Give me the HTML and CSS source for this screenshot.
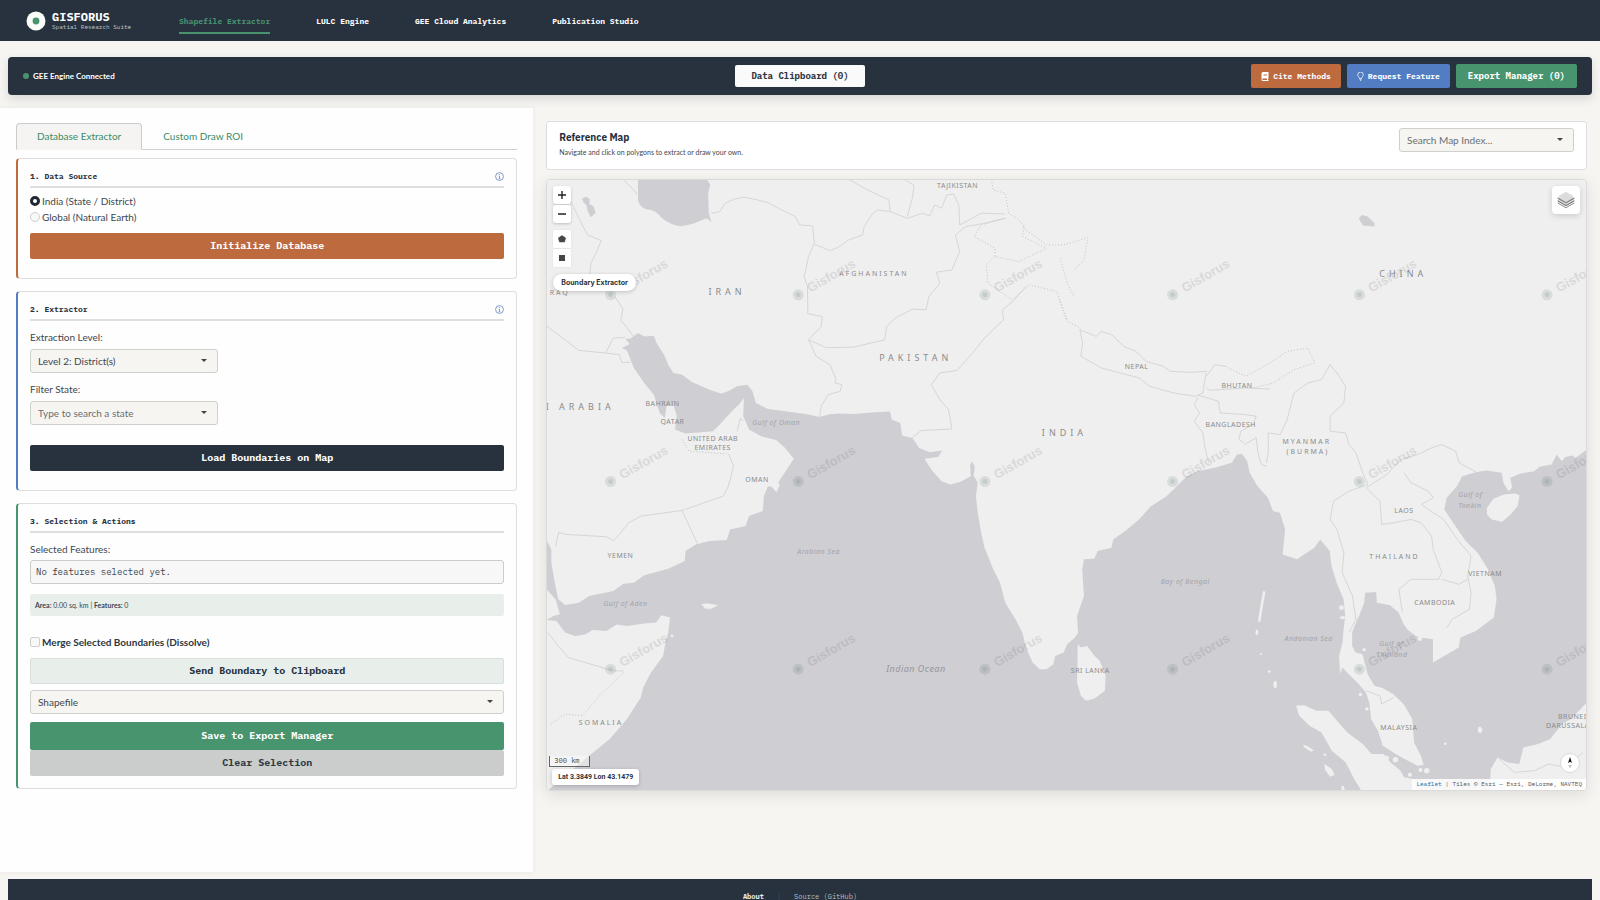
FILE: index.html
```html
<!DOCTYPE html>
<html lang="en">
<head>
<meta charset="utf-8">
<meta name="viewport" content="width=device-width, initial-scale=1">
<title>Gisforus – Spatial Research Suite</title>
<link rel="stylesheet" href="styles.css">
</head>
<body>
<header class="topbar">
  <a class="brand" href="#">
    <svg class="brand-mark" viewBox="0 0 20 20" aria-hidden="true"><circle cx="10" cy="10" r="9.5" fill="#fbfbf9"/><circle cx="10" cy="10" r="3.4" fill="#47946f"/></svg>
    <span class="brand-text"><span class="brand-name">GISFORUS</span><span class="brand-sub">Spatial Research Suite</span></span>
  </a>
  <nav class="nav">
    <a class="nav-link active" href="#">Shapefile Extractor</a>
    <a class="nav-link" href="#">LULC Engine</a>
    <a class="nav-link" href="#">GEE Cloud Analytics</a>
    <a class="nav-link" href="#">Publication Studio</a>
  </nav>
</header>

<section class="statusbar">
  <div class="status"><span class="dot"></span>GEE Engine Connected</div>
  <button class="bar-btn clip" type="button">Data Clipboard (0)</button>
  <div class="bar-actions">
    <button class="bar-btn small rust" type="button"><svg class="bi" width="8" height="9" viewBox="0 0 16 18" aria-hidden="true"><path fill="#fff" fill-rule="evenodd" d="M4 0h11v13l-1 1v2h1v2H4a3 3 0 0 1-3-3V3a3 3 0 0 1 3-3zm1 4v1h7V4zm0 3v1h7V7zM4 13a1.5 1.5 0 0 0 0 3h8v-3z"/></svg>Cite Methods</button>
    <button class="bar-btn small blue" type="button"><svg class="bi" width="7" height="9" viewBox="0 0 14 18" aria-hidden="true"><path fill="none" stroke="#fff" stroke-width="1.5" d="M5 13c0-3-3.500-4-3.500-7.500a5.500 5.500 0 0 1 11 0C12.500 9 9 10 9 13zM5 15.500h4M6 17.300h2"/></svg>Request Feature</button>
    <button class="bar-btn green" type="button">Export Manager (0)</button>
  </div>
</section>

<main class="workspace">
  <aside class="panel">
    <div class="tabs" role="tablist">
      <button class="tab active" type="button" role="tab">Database Extractor</button>
      <button class="tab" type="button" role="tab">Custom Draw ROI</button>
    </div>

    <section class="card card-rust">
      <h2 class="card-title">1. Data Source<svg class="info" viewBox="0 0 16 16" aria-hidden="true"><circle cx="8" cy="8" r="7"/><path d="M8 7v5M6.500 7.200H8M6.500 12h3M8 3.500v1.500"/></svg></h2>
      <label class="choice"><input type="radio" name="src" checked>India (State / District)</label>
      <label class="choice"><input type="radio" name="src">Global (Natural Earth)</label>
      <button class="btn rust first" type="button">Initialize Database</button>
    </section>

    <section class="card card-blue">
      <h2 class="card-title">2. Extractor<svg class="info" viewBox="0 0 16 16" aria-hidden="true"><circle cx="8" cy="8" r="7"/><path d="M8 7v5M6.500 7.200H8M6.500 12h3M8 3.500v1.500"/></svg></h2>
      <label class="label" for="level">Extraction Level:</label>
      <div class="select narrow"><select id="level"><option>Level 2: District(s)</option></select></div>
      <label class="label" for="state">Filter State:</label>
      <div class="select narrow hint"><select id="state"><option>Type to search a state</option></select></div>
      <button class="btn navy load" type="button">Load Boundaries on Map</button>
    </section>

    <section class="card card-green">
      <h2 class="card-title">3. Selection &amp; Actions</h2>
      <div class="label">Selected Features:</div>
      <output class="selected">No features selected yet.</output>
      <div class="stats"><b>Area:</b> 0.00 sq. km | <b>Features:</b> 0</div>
      <label class="choice merge"><input type="checkbox">Merge Selected Boundaries (Dissolve)</label>
      <button class="btn pale" type="button">Send Boundary to Clipboard</button>
      <div class="select format"><select aria-label="Format"><option>Shapefile</option></select></div>
      <button class="btn green save" type="button">Save to Export Manager</button>
      <button class="btn grey" type="button">Clear Selection</button>
    </section>
  </aside>

  <section class="stage">
    <div class="map-head">
      <div>
        <h1 class="map-title">Reference Map</h1>
        <p class="map-sub">Navigate and click on polygons to extract or draw your own.</p>
      </div>
      <div class="select search hint"><select aria-label="Search map"><option>Search Map Index...</option></select></div>
    </div>

    <div class="map">
      <svg class="map-art" viewBox="546 180 1041 611" preserveAspectRatio="xMidYMid slice" aria-label="Map of South Asia">
        <defs>
          <g id="wm"><circle r="5.500" fill="#4d6d62" opacity=".14"/><circle r="2.500" fill="#4d6d62" opacity=".14"/><text class="wm" x="12" y="-2" transform="rotate(-30 12 -2)">Gisforus</text></g>
        </defs>
        <rect x="546" y="180" width="1041" height="611" fill="#efefef"/>
        <g transform="translate(530 110) scale(.3444 .33333)">
          <path class="sea" d="M275 688L290 686 312 670 330 680 358 678 366 700 388 735 400 765 415 790 440 795 470 818 520 840 555 852 580 842 600 830 630 825 645 845 655 880 690 898 740 905 800 913 840 922 870 914 900 912 940 913 1000 908 1045 906 1050 930 1075 940 1080 978 1110 985 1130 1015 1160 1028 1197 1023 1185 1042 1145 1048 1165 1080 1195 1115 1220 1125 1250 1117 1280 1100 1278 1065 1284 1056 1292 1072 1288 1098 1300 1120 1295 1160 1300 1210 1310 1270 1320 1315 1345 1380 1365 1420 1380 1480 1410 1530 1430 1570 1440 1615 1460 1660 1480 1680 1500 1680 1520 1665 1525 1640 1550 1630 1560 1605 1580 1588 1592 1572 1589 1520 1609 1460 1604 1380 1609 1350 1639 1348 1649 1325 1689 1315 1694 1290 1729 1265 1769 1230 1804 1190 1849 1160 1884 1125 1909 1100 1939 1085 1989 1075 2039 1060 2054 1035 2069 1033 2084 1055 2091 1090 2114 1130 2144 1165 2159 1205 2179 1210 2194 1260 2187 1335 2229 1350 2249 1335 2279 1315 2296 1290 2324 1325 2329 1370 2344 1420 2364 1470 2369 1520 2364 1560 2361 1600 2351 1640 2354 1694 2361 1675 2379 1695 2409 1725 2429 1750 2439 1780 2444 1830 2464 1865 2478 1910 2524 1940 2579 1970 2597 1968 2589 1940 2569 1900 2564 1830 2539 1785 2509 1755 2479 1737 2454 1730 2434 1695 2419 1635 2399 1630 2389 1610 2389 1570 2404 1530 2409 1520 2424 1480 2427 1450 2459 1448 2461 1480 2499 1488 2524 1510 2539 1545 2549 1560 2574 1580 2589 1585 2624 1590 2624 1660 2649 1645 2699 1615 2704 1585 2749 1565 2801 1525 2809 1470 2804 1430 2784 1380 2754 1330 2719 1295 2689 1250 2657 1200 2664 1165 2694 1130 2709 1100 2749 1088 2779 1083 2824 1090 2829 1120 2844 1145 2854 1135 2849 1105 2879 1092 2919 1085 2934 1072 2969 1065 2984 1035 2999 1055 3009 1042 3029 1038 3039 1045 3072 1020 3072 2044 50 2044 100 2000 170 1940 230 1890 280 1830 320 1765 327 1735 350 1690 385 1640 392 1600 400 1570 405 1525 380 1518 365 1540 330 1543 280 1550 250 1546 220 1565 180 1562 160 1575 130 1581 100 1570 75 1535 46 1532 66 1520 85 1515 72 1470 46 1440 46 1292 60 1320 60 1360 70 1420 80 1470 100 1487 140 1480 170 1460 240 1445 270 1423 300 1420 330 1398 400 1378 448 1355 450 1325 480 1305 520 1295 570 1292 580 1260 625 1250 635 1220 675 1205 678 1160 690 1130 701 1132 715 1148 724 1128 720 1118 735 1095 765 1048 740 1015 715 992 670 980 635 960 618 920 620 865 605 885 590 900 545 950 530 965 450 972 420 960 425 920 415 885 395 890 390 925 375 910 358 855 330 820 300 775 280 722 265 715 288 703Z"/>
          <path class="sea" d="M312 207L312 270Q318 300 350 300Q368 305 382 325Q405 345 437 349Q470 345 488 335L512 325 525 336 518 310 516 250 522 225 512 207Z"/>
          <path class="sea" d="M150 265L162 260 172 268 170 282 182 288 189 308 175 322 166 305 162 286 152 275ZM2408 325L2418 315 2434 320 2454 339 2454 350 2438 348 2420 347Z"/>
          <path class="isle" d="M1591 1605L1600 1615 1618 1610 1640 1640 1655 1655 1672 1700 1670 1745 1640 1768 1615 1775 1600 1760 1589 1720ZM2781 1195L2800 1168 2830 1155 2865 1152 2876 1158 2870 1190 2850 1215 2825 1237 2795 1230 2781 1215ZM496 1485L512 1482 545 1488 525 1498 508 1498ZM2130 1445L2137 1447 2128 1500 2122 1538 2115 1536 2122 1490ZM2226 1790L2250 1788 2285 1805 2320 1805 2345 1835 2375 1870 2420 1905 2445 1935 2480 1935 2500 1960 2530 1985 2540 2005 2565 2010 2585 2044 2415 2044 2395 2010 2370 1960 2330 1925 2300 1870 2265 1850 2235 1820ZM2246 1906L2262 1912 2278 1925 2268 1927 2250 1915ZM2308 1965L2330 1980 2338 1998 2325 2003 2310 1982ZM2358 2030L2365 2032 2368 2044 2358 2044ZM2790 2044L2792 1980 2812 1945 2840 1960 2875 1965 2887 1915 2930 1905 2965 1890 3000 1845 3025 1830 3072 1780 3072 2044ZM2755 1855L2762 1852 2769 1862 2762 1873 2755 1868Z"/>
          <g fill="#efefef"><ellipse cx="2112" cy="1569" rx="4" ry="8"/><ellipse cx="2165" cy="1726" rx="5" ry="11"/><circle cx="2124" cy="1634" r="3"/><circle cx="2148" cy="1687" r="4"/><circle cx="2358" cy="1495" r="7"/><ellipse cx="2361" cy="1525" rx="8" ry="5"/><circle cx="2413" cy="1756" r="5"/><circle cx="2432" cy="1799" r="5"/><circle cx="2424" cy="1621" r="5"/><circle cx="2586" cy="1588" r="7"/><circle cx="2660" cy="1904" r="4"/><circle cx="2488" cy="1947" r="8"/><circle cx="2515" cy="1952" r="8"/><circle cx="2588" cy="1983" r="6"/><circle cx="2606" cy="1985" r="8"/><circle cx="2557" cy="1997" r="6"/><circle cx="2310" cy="1937" r="4"/><circle cx="3064" cy="1797" r="6"/><circle cx="411" cy="1580" r="4"/></g>
          <g class="border">
            <path d="M525 310L550 305 565 280 590 268 620 262 660 270 690 278 730 300 770 320 782 345 820 348 825 400 808 440 800 480 795 500 805 530 806 612 848 620 845 650 808 690 830 740 870 765 888 808 885 820 905 825 900 845 865 855 845 890 840 922"/>
            <path d="M808 690L860 714 940 712 1030 690 1035 650 1060 625 1110 598 1150 600 1158 560 1190 520 1180 487 1225 480 1248 425 1235 375 1265 350 1320 340 1380 325M825 403L870 422 895 412 925 390 965 375 970 350 995 310 1010 300 1045 305 1095 325 1140 310 1160 318 1175 285 1195 295 1210 255 1230 252 1245 285 1248 345 1310 310 1380 312"/>
            <path d="M925 208L980 240 1042 270 1045 303M1088 210L1115 225 1110 265 1095 320M272 212L300 240 310 255M115 270L140 325 165 375 205 392 190 430 175 460 172 492M245 560L268 598 262 632 278 650 300 682M46 648L140 722 218 730 240 685 275 683M218 730L258 735 265 758 290 758"/>
            <path d="M1110 985L1135 963 1225 958 1215 900 1190 870 1165 825 1190 790 1240 782 1285 730 1320 685 1345 660 1375 630 1372 600 1405 572 1440 530M575 1033L590 1070 575 1130 560 1160 440 1203 320 1220 285 1240 262 1270 240 1294 220 1282 100 1275 82 1268 72 1310M440 1203L485 1303M600 965L610 925 618 935"/>
            <path d="M1597 660L1645 680 1660 665 1690 675 1725 710 1760 725 1790 755 1840 770 1860 785 1925 788 1965 785 1955 850 1935 860 1870 850 1800 830 1770 805 1660 775 1600 740 1605 700ZM1965 800L1990 765 2020 770M1965 835L1975 842 2080 835 2150 838M1940 857L1970 865 2000 875 2005 910 2080 915 2110 920 2100 945 2065 965 2060 990 2075 1000M1940 865L1930 885 1945 910 1930 935 1955 970 1960 1010 1972 1060"/>
            <path d="M2180 975L2200 930 2210 890 2220 850 2260 820 2300 810 2325 765 2345 790 2370 830 2365 880 2325 920 2325 965 2370 970 2380 1005 2400 1030 2420 1090 2435 1125 2380 1145 2335 1175 2325 1230 2345 1260 2365 1330 2360 1390 2390 1460 2400 1530 2380 1570M2140 1060L2145 1030 2145 970 2180 975M2075 1005L2110 985 2115 1030 2125 1065 2140 1070"/>
            <path d="M2430 1135L2490 1095 2530 1050 2580 1035 2620 1015 2650 1005 2690 1025 2700 1060 2750 1088M2430 1135L2470 1175 2475 1245 2510 1240 2560 1230 2590 1240 2620 1280 2625 1320 2650 1390 2640 1410 2560 1410 2525 1440 2535 1510M2540 1090L2560 1120 2610 1145 2625 1165 2590 1185 2655 1230 2695 1290 2735 1340 2725 1400 2735 1450 2730 1500 2680 1530 2665 1555M2650 1410L2700 1425 2725 1410M2430 1745L2470 1760 2475 1785 2510 1765M2817 1950L2860 1990 2920 1985 2960 1965 3010 1975 3060 1930M50 1570L80 1610 110 1645 240 1685 270 1685"/>
            <path class="dots" d="M270 1690L200 1760 150 1820 100 1815 55 1848M440 990L460 1025 570 1033M1340 208L1345 240 1380 250 1390 310 1420 330 1440 360 1500 405 1550 405 1620 383 1610 450 1580 480M1380 325L1310 345 1290 380 1350 415 1350 440 1325 465 1330 520 1400 570 1450 525 1530 545 1560 630M1350 440L1420 455 1500 415 1430 380 1435 345M1540 445L1560 520 1580 560M1539 575L1560 635 1600 655M2020 770L2080 800 2150 760 2200 725 2260 715 2280 760 2220 780 2160 820 2100 835"/>
          </g>
        </g>
        <g class="place">
          <text x="937" y="188">TAJIKISTAN</text><text x="645" y="406">BAHRAIN</text><text x="660" y="424">QATAR</text><text x="687" y="441">UNITED ARAB</text><text x="694" y="450">EMIRATES</text><text x="745" y="483">OMAN</text><text x="607" y="559">YEMEN</text><text x="1125" y="369">NEPAL</text><text x="1222" y="388">BHUTAN</text><text x="1206" y="427">BANGLADESH</text><text x="1395" y="514">LAOS</text><text x="1469" y="577">VIETNAM</text><text x="1415" y="606">CAMBODIA</text><text x="1071" y="674">SRI LANKA</text><text x="1381" y="731">MALAYSIA</text><text x="1559" y="720">BRUNEI</text><text x="1547" y="729">DARUSSALAM</text>
        </g>
        <g class="place wide"><text x="839" y="276">AFGHANISTAN</text><text x="1283" y="444">MYANMAR</text><text x="1287" y="454">(BURMA)</text><text x="1370" y="560">THAILAND</text><text x="578" y="726">SOMALIA</text><text x="549" y="295">RAQ</text></g>
        <g class="place nation"><text x="708" y="295">IRAN</text><text x="879" y="361">PAKISTAN</text><text x="1042" y="436">INDIA</text><text x="1380" y="277">CHINA</text><text x="545" y="410">I ARABIA</text></g>
        <g class="water"><text x="752" y="425">Gulf of Oman</text><text x="797" y="555">Arabian Sea</text><text x="603" y="607">Gulf of Aden</text><text x="1161" y="585">Bay of Bengal</text><text x="1459" y="498">Gulf of</text><text x="1459" y="509">Tonkin</text><text x="1285" y="642">Andaman Sea</text><text x="1380" y="647">Gulf of</text><text x="1377" y="658">Thailand</text><text class="ocean" x="886" y="673">Indian Ocean</text></g>
        <use href="#wm" x="610" y="295"/><use href="#wm" x="798" y="295"/><use href="#wm" x="985" y="295"/><use href="#wm" x="1173" y="295"/><use href="#wm" x="1360" y="295"/><use href="#wm" x="1548" y="295"/>
        <use href="#wm" x="610" y="482"/><use href="#wm" x="798" y="482"/><use href="#wm" x="985" y="482"/><use href="#wm" x="1173" y="482"/><use href="#wm" x="1360" y="482"/><use href="#wm" x="1548" y="482"/>
        <use href="#wm" x="610" y="670"/><use href="#wm" x="798" y="670"/><use href="#wm" x="985" y="670"/><use href="#wm" x="1173" y="670"/><use href="#wm" x="1360" y="670"/><use href="#wm" x="1548" y="670"/>
      </svg>

      <div class="map-tools">
        <div class="zoom">
          <button type="button" aria-label="Zoom in"><svg width="10" height="10" viewBox="0 0 10 10"><path d="M5 1v8M1 5h8" stroke="#222" stroke-width="1.400"/></svg></button>
          <button type="button" aria-label="Zoom out"><svg width="10" height="10" viewBox="0 0 10 10"><path d="M1 5h8" stroke="#222" stroke-width="1.400"/></svg></button>
        </div>
        <div class="draw">
          <button type="button" aria-label="Draw polygon"><svg width="8" height="8" viewBox="0 0 8 8"><path d="M4 .5L7.700 3 6.500 7h-5L.3 3z" fill="#464646" stroke="#464646" stroke-width=".5"/></svg></button>
          <button type="button" aria-label="Draw rectangle"><svg width="8" height="8" viewBox="0 0 8 8"><path d="M1 1h6v6H1z" fill="#464646"/></svg></button>
        </div>
        <div class="pill">Boundary Extractor</div>
      </div>
      <button class="layers" type="button" aria-label="Layers"><svg width="18" height="18" viewBox="0 0 26 26"><path d="M13 1L3 7v4l10 5 10-5V7z" fill="#dcdcdc"/><path d="M1 9l12 7 12-7v2.500l-12 7-12-7z" fill="#8a8a8a"/><path d="M1 13l12 7 12-7v2l-12 7-12-7z" fill="#7c7c7c"/><path d="M1 16.500l12 7 12-7V18l-12 7-12-7z" fill="#8a8a8a"/></svg></button>
      <div class="map-foot">
        <div class="scale">300 km</div>
        <div class="coords">Lat 3.3849 Lon 43.1479</div>
      </div>
      <svg class="compass" viewBox="0 0 20 20" aria-label="North"><circle cx="10" cy="10" r="9.500" fill="#fff" stroke="#d9d9d9"/><path d="M10 4l2 6-2-1.200L8 10z" fill="#111"/><path d="M8.200 12h3.600L10 15.500z" fill="#c4c4c4"/></svg>
      <div class="credit"><a href="#">Leaflet</a> | Tiles © Esri — Esri, DeLorme, NAVTEQ</div>
    </div>
  </section>
</main>

<footer class="footer">
  <a class="strong" href="#">About</a><span class="sep">|</span><a href="#">Source (GitHub)</a>
</footer>
</body>
</html>
```
FILE: styles.css
```css
:root {
  --navy: #27323e;
  --green: #47946f;
  --rust: #bc6a3e;
  --blue: #527dc2;
  --paper: #f6f5f1;
  --line: #dedede;
  --mono: "IBM Plex Mono", "DejaVu Sans Mono", "Liberation Mono", monospace;
  --plex: "IBM Plex Sans", "Noto Sans", sans-serif;
}
* { box-sizing: border-box; }
body {
  margin: 0;
  height: 100vh;
  overflow: hidden;
  background: var(--paper);
  color: #3d464f;
  font: 10px/16px Lato, sans-serif;
}
button, select, input { font: inherit; color: inherit; margin: 0; }
button { cursor: pointer; border: 0; padding: 0; }
a { color: inherit; text-decoration: none; }
h1, h2, p { margin: 0; }

.topbar {
  display: flex;
  align-items: center;
  height: 41px;
  padding-left: 26px;
  background: var(--navy);
  color: #fff;
  font-family: var(--mono);
}
.brand { display: flex; align-items: center; gap: 6px; width: 153px; }
.brand-mark { width: 20px; height: 20px; flex: none; }
.brand-text { display: flex; flex-direction: column; }
.brand-name { font-size: 12px; line-height: 13px; font-weight: 700; }
.brand-sub { font-size: 6px; line-height: 8px; color: #bcc3ca; white-space: nowrap; }
.nav { display: flex; gap: 46px; }
.nav-link { font-size: 8px; line-height: 22px; font-weight: 700; border-bottom: 2px solid transparent; margin-top: 2px; }
.nav-link.active { color: var(--green); border-color: var(--green); }

.statusbar {
  display: grid;
  grid-template-columns: 1fr auto 1fr;
  align-items: center;
  height: 38px;
  margin: 16px 8px 0;
  padding: 0 15px;
  border-radius: 4px;
  background: var(--navy);
  box-shadow: 0 4px 10px rgba(40, 50, 60, .15);
}
.status { display: flex; align-items: center; gap: 4px; color: #fff; font-size: 8px; font-weight: 700; }
.dot { width: 6px; height: 6px; border-radius: 50%; background: var(--green); }
.bar-actions { display: flex; justify-content: flex-end; gap: 6px; }
.bar-btn {
  display: flex;
  align-items: center;
  gap: 4px;
  height: 24px;
  padding: 0 12px;
  border-radius: 2px;
  color: #fff;
  font: 700 9px/12px var(--mono);
  white-space: nowrap;
}
.bar-btn.small { padding: 0 10px; font-size: 8px; }
.bar-btn.clip { height: 22px; padding: 0 16px; background: #fafafa; color: #2a343f; }
.rust { background: var(--rust); }
.blue { background: var(--blue); }
.green { background: var(--green); }
.navy { background: var(--navy); }

.workspace { display: grid; grid-template-columns: 1fr 2fr; margin-top: 13px; }
.panel { min-height: 764px; padding: 15px 16px; background: #fefefe; box-shadow: 0 0 6px rgba(0, 0, 0, .06); }
.tabs { display: flex; height: 27px; border-bottom: 1px solid #cfcfcf; }
.tab { height: 27px; padding: 0 20px 2px; border: 1px solid transparent; background: none; color: #3a8c68; }
.tab.active { border-color: #cbcbcb; border-bottom-color: var(--paper); border-radius: 4px 4px 0 0; background: #f5f4f2; }

.card { padding: 12px 12px 19px; border: 1px solid var(--line); border-left: 2px solid; border-radius: 4px; }
.card + .card { margin-top: 12px; }
.tabs + .card { margin-top: 8px; }
.card-rust { border-left-color: var(--rust); }
.card-blue { border-left-color: var(--blue); }
.card-green { border-left-color: var(--green); padding-bottom: 12px; }
.card-title {
  display: flex;
  justify-content: space-between;
  align-items: center;
  padding-bottom: 5px;
  border-bottom: 2px solid var(--line);
  color: #27323e;
  font: 700 8px/10px var(--mono);
}
.info { width: 9px; height: 9px; fill: none; stroke: #7189c4; stroke-width: 1.5; }
.choice { display: flex; align-items: center; gap: 2px; height: 16px; }
.card-title + .choice { margin-top: 5px; }
input[type="radio"], input[type="checkbox"] {
  appearance: none;
  width: 10px;
  height: 10px;
  border: 1px solid #cfcfcf;
  background: #f8f8f7;
}
input[type="radio"] { border-radius: 50%; }
input[type="radio"]:checked { border: 3px solid #1f2833; background: #fff; }
input[type="checkbox"] { border-radius: 2px; }
.merge { margin-top: 18px; margin-bottom: 8px; color: #2c3640; font-weight: 700; }

.btn { display: block; width: 100%; height: 26px; border-radius: 2px; color: #fff; font: 700 10px/14px var(--mono); }
.btn.first { margin-top: 8px; }
.btn.load { margin-top: 20px; }
.btn.save { margin-top: 8px; height: 28px; }
.btn.pale { background: #e8efeb; border: 1px solid #d8dedb; color: #27323e; }
.btn.grey { background: #cbcdcd; color: #303943; }

.label { display: block; margin-top: 8px; }
.select { position: relative; height: 24px; margin-top: 4px; }
.select.narrow { max-width: 188px; }
.select.format { margin-top: 6px; }
.select select {
  appearance: none;
  width: 100%;
  height: 100%;
  padding: 0 20px 1px 7px;
  border: 1px solid #cfcfcc;
  border-radius: 3px;
  background: #f6f5f2;
}
.select.hint select { color: #6a6f73; }
.select::after {
  content: "";
  position: absolute;
  right: 11px;
  top: 10px;
  border: 3px solid transparent;
  border-top-color: #444;
  border-bottom: 0;
}
.selected {
  display: block;
  height: 24px;
  margin-top: 3px;
  padding: 0 5px;
  border: 1px solid #cccccf;
  border-radius: 3px;
  background: #f7f7f8;
  font: 9px/22px var(--mono);
}
.stats { margin-top: 10px; padding: 0 5px; border-radius: 2px; background: #e8efea; font-size: 7px; line-height: 22px; }

.stage { padding: 13px; }
.map-head {
  display: flex;
  justify-content: space-between;
  height: 49px;
  padding: 6px 12px;
  border: 1px solid var(--line);
  border-radius: 3px;
  background: #fff;
}
.map-title { margin-top: 2px; color: #27323e; font: 700 10px/16px var(--plex); }
.map-sub { font-size: 7px; line-height: 12px; }
.select.search { width: 175px; margin: 0; }

.map {
  position: relative;
  height: 612px;
  margin-top: 9px;
  border: 1px solid #dadada;
  border-radius: 4px;
  box-shadow: 0 4px 16px rgba(0, 0, 0, .1);
  overflow: hidden;
}
.map-art { display: block; width: 100%; height: 100%; }
.sea { fill: #cfced3; }
.isle { fill: #efefef; }
.border path { fill: none; stroke: #d6d6d6; stroke-width: 1; vector-effect: non-scaling-stroke; stroke-linejoin: round; }
.border .dots { stroke: #c2c2c2; stroke-dasharray: 1 2; }
.place { font: 7px "Noto Sans", sans-serif; fill: #8b8b8b; letter-spacing: 0.5px; }
.place.wide { letter-spacing: 2px; }
.place.nation { font-size: 9px; letter-spacing: 4px; }
.water { font: italic 7px "Noto Sans", sans-serif; fill: #a3a3aa; letter-spacing: 0.5px; }
.water .ocean { font-size: 9px; fill: #96969c; }
.wm { font: 700 13px "Liberation Sans", sans-serif; fill: #444; opacity: .12; }

.map-tools { position: absolute; left: 6px; top: 6px; display: flex; flex-direction: column; align-items: flex-start; gap: 7px; }
.zoom, .draw { display: flex; flex-direction: column; gap: 1px; }
.map-tools button { display: grid; place-items: center; width: 18px; height: 18px; background: #fff; border-radius: 3px; box-shadow: 0 1px 3px rgba(0, 0, 0, .2); }
.draw button { border-radius: 1px; box-shadow: 0 0 2px rgba(0, 0, 0, .08); }
.pill, .coords {
  background: #fff;
  color: #2b333b;
  font: 700 7px/16px Inter, sans-serif;
  box-shadow: 0 1px 4px rgba(0, 0, 0, .2);
}
.pill { padding: 0 8px; border-radius: 9px; line-height: 17px; }
.layers { position: absolute; right: 6px; top: 6px; display: grid; place-items: center; width: 28px; height: 28px; border-radius: 4px; background: #fff; box-shadow: 0 2px 6px rgba(0, 0, 0, .15); }
.map-foot { position: absolute; left: 2px; bottom: 5px; }
.scale { width: 41px; padding-left: 4px; border: 1px solid #666; border-top: 0; background: rgba(255, 255, 255, .4); font: 7px/10px var(--mono); }
.coords { margin: 2px 0 0 3px; padding: 0 6px; border-radius: 3px; font-family: Roboto, sans-serif; }
.compass { position: absolute; right: 6px; bottom: 17px; width: 20px; height: 20px; }
.credit { position: absolute; right: 0; bottom: 0; padding: 0 4px; background: rgba(255, 255, 255, .85); color: #555; font: 6px/11px var(--mono); }
.credit a { color: #1778ad; }

.footer {
  display: flex;
  justify-content: center;
  gap: 13px;
  margin: 7px 8px 0;
  padding: 13px 0;
  background: var(--navy);
  color: #b9c2ca;
  font: 7px/10px var(--mono);
}
.footer .strong { color: #e6eaee; font-weight: 700; }
.sep { color: #46525e; }
```
